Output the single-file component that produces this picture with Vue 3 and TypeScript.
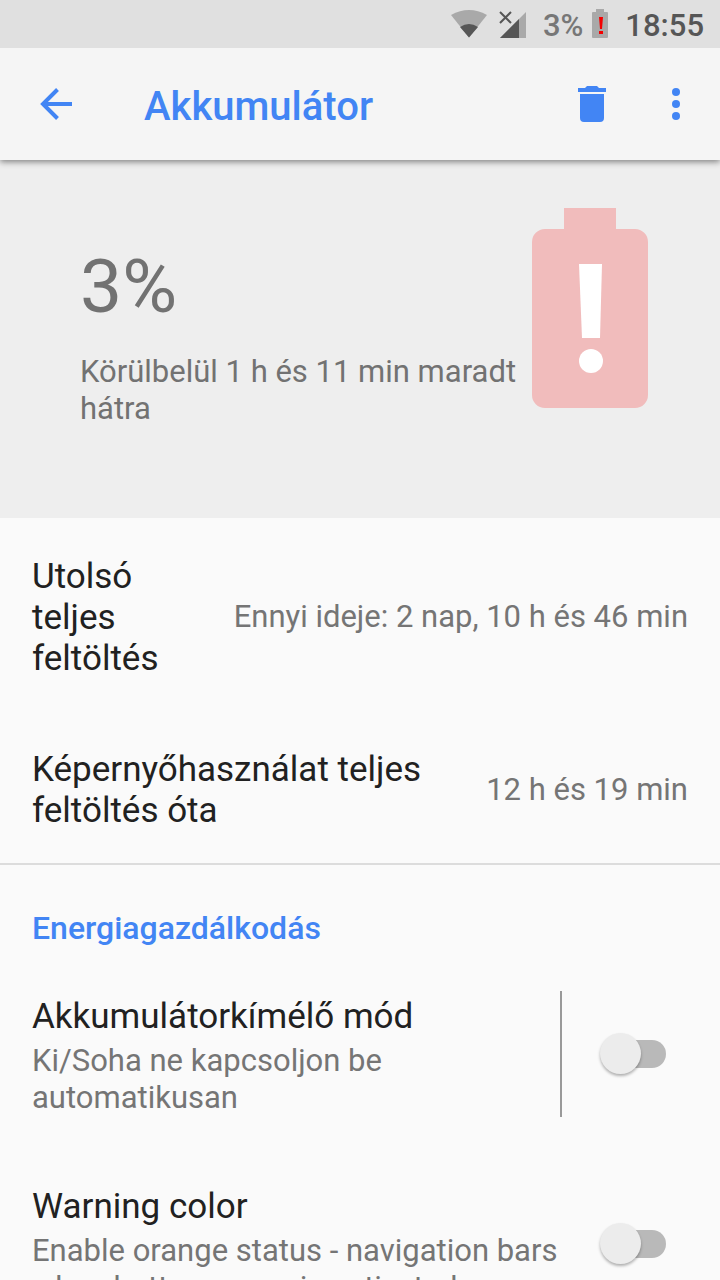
<script setup lang="ts">
import { ref } from 'vue'

interface UsageFact {
  title: string
  value: string
}

interface Preference {
  id: string
  title: string
  summary: string
  divided: boolean
}

const facts: UsageFact[] = [
  { title: 'Utolsó teljes feltöltés', value: 'Ennyi ideje: 2 nap, 10 h és 46 min' },
  { title: 'Képernyőhasználat teljes feltöltés óta', value: '12 h és 19 min' },
]

const preferences: Preference[] = [
  {
    id: 'saver',
    title: 'Akkumulátorkímélő mód',
    summary: 'Ki/Soha ne kapcsoljon be automatikusan',
    divided: true,
  },
  {
    id: 'warning',
    title: 'Warning color',
    summary: 'Enable orange status - navigation bars when battery saver is activated',
    divided: false,
  },
]

const enabled = ref<Record<string, boolean>>({ saver: false, warning: false })
</script>

<template>
  <div class="screen">
    <div class="status">
      <svg class="wifi" viewBox="0 0 36 28" aria-hidden="true">
        <path d="M0 5Q18-5 36 5L18 27.500Z" fill="#a9a9a9" />
        <path d="M9 17Q18 11 27 17L18 27.500Z" fill="#565656" />
      </svg>
      <svg class="signal" viewBox="0 0 28 28" aria-hidden="true">
        <path d="M27 2V28H1Z" fill="#a9a9a9" />
        <path d="M20 9V28H1Z" fill="#565656" />
        <path d="M0 1H12V13H0Z" fill="#e0e0e0" />
        <path d="M1 2L12 13M12 2L1 13" stroke="#565656" stroke-width="2" />
      </svg>
      <span class="level">3%</span>
      <svg class="cell" viewBox="0 0 16 30" aria-hidden="true">
        <path d="M4 0H12V3H15Q16 3 16 4V28Q16 29 15 29H1Q0 29 0 28V4Q0 3 1 3H4Z" fill="#a9a9a9" />
        <path d="M7 8H11L10 20H8ZM7 22H11V25H7Z" fill="#f40000" />
      </svg>
      <span class="clock">18:55</span>
    </div>

    <header class="bar">
      <button class="icon" type="button" aria-label="Vissza">
        <svg viewBox="0 0 48 48" fill="none" stroke="#4285f4" stroke-width="4" aria-hidden="true">
          <path d="M40 24H11M25.500 9.500L11 24L25.500 38.500" />
        </svg>
      </button>
      <h1>Akkumulátor</h1>
      <button class="icon" type="button" aria-label="Törlés">
        <svg viewBox="0 0 48 48" fill="#4285f4" aria-hidden="true">
          <path d="M12 14H36V38Q36 42 32 42H16Q12 42 12 38ZM10 8H17L19 6H29L31 8H38V12H10Z" />
        </svg>
      </button>
      <button class="icon" type="button" aria-label="További lehetőségek">
        <svg viewBox="0 0 48 48" fill="#4285f4" aria-hidden="true">
          <circle cx="24" cy="12" r="4" />
          <circle cx="24" cy="24" r="4" />
          <circle cx="24" cy="36" r="4" />
        </svg>
      </button>
    </header>

    <main>
      <section class="summary">
        <div class="reading">
          <p class="percent">3%</p>
          <p class="remaining">Körülbelül 1 h és 11 min maradt hátra</p>
        </div>
        <svg class="battery" viewBox="0 0 116 200" aria-hidden="true">
          <path d="M32 0H84V21H103A13 13 0 0 1 116 34V187A13 13 0 0 1 103 200H13A13 13 0 0 1 0 187V34A13 13 0 0 1 13 21H32Z" fill="#f1bcbc" />
          <path d="M47 56H70L68 130H50Z" fill="#fff" />
          <circle cx="59" cy="153" r="12" fill="#fff" />
        </svg>
      </section>

      <dl class="facts">
        <div v-for="fact in facts" :key="fact.title" class="fact">
          <dt>{{ fact.title }}</dt>
          <dd>{{ fact.value }}</dd>
        </div>
      </dl>

      <section class="group">
        <h2>Energiagazdálkodás</h2>
        <label v-for="item in preferences" :key="item.id" class="pref" :for="item.id">
          <span class="words" :class="{ divided: item.divided }">
            <span class="name">{{ item.title }}</span>
            <span class="note">{{ item.summary }}</span>
          </span>
          <input :id="item.id" v-model="enabled[item.id]" class="switch" type="checkbox" role="switch" />
        </label>
      </section>
    </main>
  </div>
</template>

<style>
body {
  margin: 0;
}
</style>

<style scoped>
.screen {
  display: flex;
  flex-direction: column;
  height: 100vh;
  overflow: hidden;
  background: #fafafa;
  color: #212121;
  font-family: Roboto, "Liberation Sans", sans-serif;
}

h1,
h2,
p,
dl,
dd {
  margin: 0;
}

.status {
  flex: none;
  position: relative;
  z-index: 2;
  display: flex;
  align-items: center;
  justify-content: flex-end;
  height: 48px;
  padding-right: 16px;
  background: #e0e0e0;
  color: #565656;
  font-size: 31px;
  line-height: 36px;
  font-weight: 500;
}

.wifi {
  width: 36px;
  height: 28px;
  margin-right: 12px;
}

.signal {
  width: 28px;
  height: 28px;
  margin-right: 16px;
}

.level,
.clock {
  padding-top: 3px;
}

.level {
  margin-right: 9px;
  color: #777;
}

.cell {
  width: 16px;
  height: 30px;
  margin-right: 17px;
}

.bar {
  flex: none;
  position: relative;
  z-index: 1;
  display: flex;
  align-items: center;
  gap: 36px;
  height: 112px;
  padding: 0 20px 0 32px;
  background: #f5f5f5;
  box-shadow: 0 2px 6px rgba(0, 0, 0, 0.45);
}

.icon {
  width: 48px;
  height: 48px;
  padding: 0;
  border: 0;
  background: none;
}

.icon svg {
  display: block;
  width: 48px;
  height: 48px;
}

h1 {
  flex: 1;
  padding: 4px 0 0 28px;
  color: #4285f4;
  font-size: 40px;
  font-weight: 500;
}

main {
  flex: 1;
  min-height: 0;
  overflow-y: auto;
  scrollbar-width: none;
}

.summary {
  display: flex;
  align-items: flex-start;
  justify-content: space-between;
  height: 310px;
  padding: 48px 72px 0 80px;
  background: #eee;
  color: #727272;
}

.reading {
  flex: 1;
  margin-right: 12px;
}

.percent {
  padding-top: 34px;
  font-size: 75px;
  line-height: 88px;
}

.remaining {
  margin-top: 23px;
  font-size: 31px;
  line-height: 37px;
}

.battery {
  flex: none;
  width: 116px;
  height: 200px;
}

.facts {
  border-bottom: 2px solid #dcdcdc;
}

.fact {
  display: flex;
  align-items: center;
  gap: 64px;
  padding: 36px 32px 32px;
}

.fact dt {
  flex: 1;
  padding-top: 2px;
  font-size: 35px;
  line-height: 41px;
}

.fact dd {
  flex: none;
  color: #757575;
  font-size: 31px;
  line-height: 37px;
}

h2 {
  padding: 45px 32px 29px;
  color: #4285f4;
  font-size: 32px;
  line-height: 36px;
  font-weight: 500;
}

.pref {
  display: flex;
  align-items: center;
  gap: 38px;
  padding: 16px 54px 48px 32px;
}

.words {
  flex: 1;
  display: flex;
  flex-direction: column;
  gap: 5px;
  padding: 5px 0 1px;
}

.divided {
  border-right: 2px solid #999;
}

.name {
  font-size: 35px;
  line-height: 41px;
}

.note {
  color: #757575;
  font-size: 31px;
  line-height: 37px;
}

.switch {
  appearance: none;
  flex: none;
  position: relative;
  width: 66px;
  height: 42px;
  margin: 0;
}

.switch::before {
  content: "";
  position: absolute;
  inset: 7px 0 7px 8px;
  border-radius: 14px;
  background: #b9b9b9;
}

.switch::after {
  content: "";
  position: absolute;
  inset: 0 auto auto 0;
  width: 41px;
  height: 41px;
  border-radius: 50%;
  background: #ececec;
  box-shadow: 0 2px 3px rgba(0, 0, 0, 0.3);
}

.switch:checked::before {
  background: #a0c2fa;
}

.switch:checked::after {
  inset: 0 0 auto auto;
  background: #4285f4;
}
</style>
